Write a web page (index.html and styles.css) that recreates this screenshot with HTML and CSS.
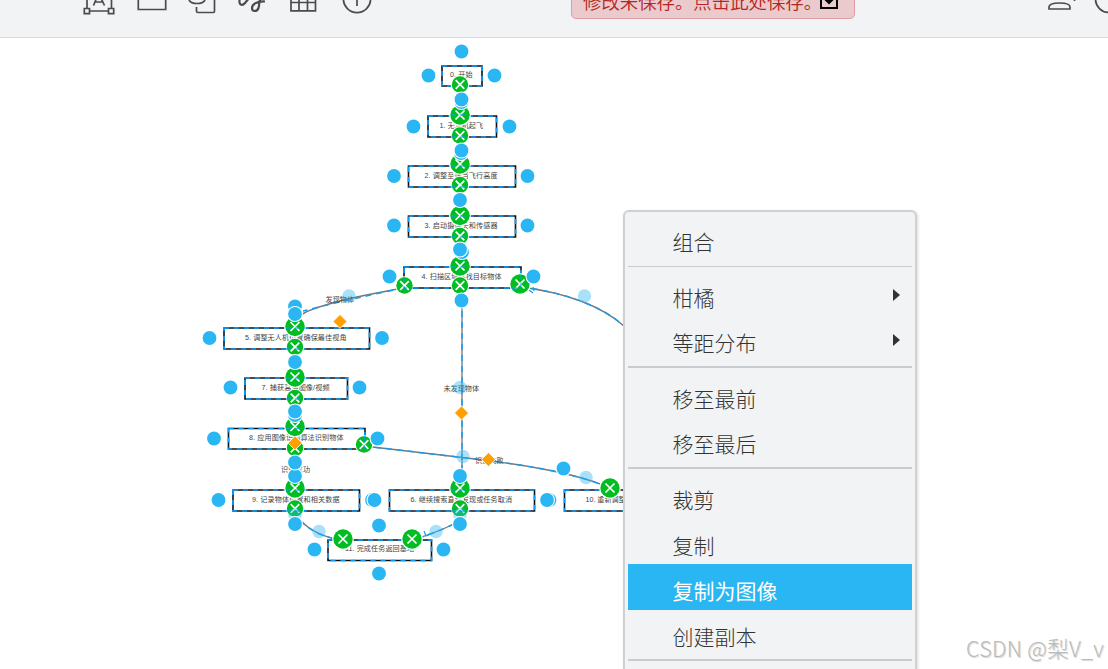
FILE: index.html
```html
<!DOCTYPE html>
<html lang="zh-CN">
<head>
<meta charset="utf-8">
<title>流程图</title>
<link rel="stylesheet" href="styles.css">
</head>
<body>
<div class="app">
  <header class="toolbar">
    <svg class="tools" width="300" height="20" viewBox="80 0 300 20">
      <path d="M87 0V8M111.500 0V8M90 11H108M93.500 5.500L97.500-4H100L104.500 5.500M95 2H103"/>
      <path d="M84.300 8.500h5.200v5.200h-5.200zM108.500 8.500h5.200v5.200h-5.200z"/>
      <path d="M138.300-4V9.500H165.700V-4"/>
      <path d="M189 0Q191 3.500 197 3.500Q203 3.500 205 0M196.500 7V11Q196.500 12.500 198 12.500H213.500Q214.500 12.500 214.500 11V-2"/>
      <path class="thick" d="M240-2C238 5 242 6.500 245 3L250-3M265 1.500C258 1 252 4 252 8C252 12 257 12 258.500 8C260 4 258 0 262-3"/>
      <path d="M291-4V10.800H315.500V-4M299-4V10.500M307.500-4V10.500M291 2.500H315.500"/>
      <circle cx="357" cy="-1" r="13.600"/><path d="M357-5V6"/>
    </svg>
    <button class="notice"><span>修改未保存。点击此处保存。</span>
      <svg class="save" width="20" height="20" viewBox="0 0 20 20"><path d="M2 1V18H18V1"/><path class="arrow" d="M5 9.500H8V5H12V9.500H15L10 14.500Z"/></svg>
    </button>
    <svg class="tools user" width="68" height="20" viewBox="1040 0 68 20">
      <path d="M1049 9V7Q1049 3 1059.500 3T1070 7V9ZM1074.500-4V1"/><circle cx="1109" cy="-1" r="13.500"/>
    </svg>
  </header>
  <main class="canvas">
    <svg class="diagram" width="1108" height="631" viewBox="0 38 1108 631">
      <defs>
        <g id="port"><circle class="halo" r="8"/><circle class="blue" r="6.900"/></g>
        <g id="green"><circle class="halo" r="10.800"/><circle class="green" r="9.700"/><path class="cross" d="M-4.500-4.500L4.500 4.500M4.500-4.500L-4.500 4.500"/></g>
        <g id="green-s"><circle class="halo" r="9.200"/><circle class="green" r="8.200"/><path class="cross" d="M-4.300-4.300L4.300 4.300M4.300-4.300L-4.300 4.300"/></g>
        <path id="diamond" class="orange" d="M0-7L7 0L0 7L-7 0Z"/>
      </defs>
      <path class="edge" d="M462 300V490M404 288Q318 303 301 315M521 287Q590 296 624 326M364 446L475 459Q570 470 610 488M300 520Q316 537 343 540M454 524Q433 534 412 540"/>
      <path class="edge-dash" d="M462 300V490M404 288Q350 299 303 311M521 287Q590 296 624 326M364 446L475 459Q570 470 610 488M300 520Q316 537 343 540M454 524Q433 534 412 540"/>
      <path class="node" d="M442 66H482V86H442ZM428 116H496.500V137H428ZM408.500 166H515.500V187H408.500ZM408.500 216H515.500V237H408.500ZM404 267H521V288H404ZM224 328H369.500V349H224ZM245 378H347.500V399H245ZM228.500 428.500H365V449H228.500ZM233 490H359.500V511H233ZM389.500 490H534.500V511H389.500ZM564.500 490H700V511H564.500ZM328 540H431.500V560.500H328Z"/>
      <path class="node-dash" d="M442 66H482V86H442ZM428 116H496.500V137H428ZM408.500 166H515.500V187H408.500ZM408.500 216H515.500V237H408.500ZM404 267H521V288H404ZM224 328H369.500V349H224ZM245 378H347.500V399H245ZM228.500 428.500H365V449H228.500ZM233 490H359.500V511H233ZM389.500 490H534.500V511H389.500ZM564.500 490H700V511H564.500ZM328 540H431.500V560.500H328Z"/>
      <path class="hint" d="M533 287L534 291M529 290L533 293M424 531L426 536L431 534"/>
      <g class="label">
        <text x="450" y="77" textLength="22.500">0. 开始</text>
        <text x="439.500" y="128" textLength="43.500">1. 无人机起飞</text>
        <text x="424.500" y="178" textLength="73">2. 调整至适当飞行高度</text>
        <text x="424.500" y="228" textLength="73">3. 启动摄像头和传感器</text>
        <text x="421.500" y="279" textLength="80">4. 扫描区域寻找目标物体</text>
        <text x="245" y="340" textLength="101.500">5. 调整无人机位置确保最佳视角</text>
        <text x="261.500" y="390" textLength="68">7. 捕获高清图像/视频</text>
        <text x="249" y="440" textLength="94.500">8. 应用图像识别算法识别物体</text>
        <text x="252" y="502" textLength="87.500">9. 记录物体位置和相关数据</text>
        <text x="410.500" y="502" textLength="101.500">6. 继续搜索直到发现或任务取消</text>
        <text x="585.500" y="502">10. 重新调整识别</text>
        <text x="345" y="551" textLength="69">11. 完成任务返回基地</text>
        <text x="325.500" y="302" textLength="28.500">发现物体</text>
        <text x="443.500" y="391" textLength="35.500">未发现物体</text>
        <text x="281" y="472" textLength="29">识别成功</text>
        <text x="475" y="463" textLength="28.500">识别失败</text>
      </g>
      <g class="faint">
        <circle cx="349" cy="296" r="6.700"/><circle cx="584.500" cy="296" r="6.700"/><circle cx="460" cy="387.500" r="6.700"/><circle cx="463" cy="456.500" r="6.700"/><circle cx="586" cy="477.500" r="6.700"/><circle cx="319" cy="531.500" r="6.700"/><circle cx="436" cy="531.500" r="6.700"/>
      </g>
      <use href="#green" x="460" y="115"/><use href="#green" x="460" y="164"/><use href="#green" x="460" y="215.500"/><use href="#green" x="460" y="266"/>
      <use href="#green" x="295" y="326.500"/><use href="#green" x="295" y="377"/><use href="#green" x="295" y="426.500"/><use href="#green" x="295" y="488"/><use href="#green" x="460" y="488"/><use href="#green" x="610" y="488"/><use href="#green" x="520" y="284"/><use href="#green" x="343" y="539"/><use href="#green" x="412" y="539"/>
      <use href="#green-s" x="460" y="84.500"/><use href="#green-s" x="460" y="135.500"/><use href="#green-s" x="460" y="185"/><use href="#green-s" x="460" y="236"/><use href="#green-s" x="460" y="285.500"/><use href="#green-s" x="404.500" y="285.500"/>
      <use href="#green-s" x="295" y="347"/><use href="#green-s" x="295" y="398"/><use href="#green-s" x="295" y="448"/><use href="#green-s" x="364" y="444.500"/><use href="#green-s" x="295" y="508.500"/><use href="#green-s" x="460" y="508.500"/>
      <g class="faint"><circle cx="295" cy="515" r="6.700"/><circle cx="460" cy="515" r="6.700"/></g>
      <path class="over-dash" d="M451 115H470M451 137H470M451 166H470M451 187H470M451 216H470M451 237H470M451 267H470M286 328H305M286 349H305M286 378H305M286 399H305M286 428.500H305M286 490H305M451 490H470M286 511H305M451 511H470M404 277V288H413M512 288H521V275M364.500 436V449"/>
      <use href="#port" x="461.500" y="102"/><use href="#port" x="461" y="153"/><use href="#port" x="462" y="252"/><use href="#port" x="295" y="415"/>
      <use href="#port" x="461.500" y="51.500"/><use href="#port" x="428.500" y="75.500"/><use href="#port" x="494.500" y="75.500"/><use href="#port" x="461.500" y="99.500"/>
      <use href="#port" x="413.500" y="126.500"/><use href="#port" x="509.500" y="126.500"/><use href="#port" x="461.500" y="150.500"/><use href="#port" x="394" y="176"/><use href="#port" x="527.500" y="176"/><use href="#port" x="460" y="200"/>
      <use href="#port" x="394" y="225.500"/><use href="#port" x="527.500" y="225.500"/><use href="#port" x="460" y="249.500"/><use href="#port" x="389.500" y="276.500"/><use href="#port" x="533.500" y="276.500"/><use href="#port" x="461.500" y="300.500"/>
      <use href="#port" x="295" y="306.500"/><use href="#port" x="295" y="314"/><use href="#port" x="209.500" y="338"/><use href="#port" x="382" y="338"/><use href="#port" x="295" y="362"/>
      <use href="#port" x="230.500" y="387.500"/><use href="#port" x="359.500" y="387.500"/><use href="#port" x="295" y="411.500"/><use href="#port" x="214" y="438.500"/><use href="#port" x="377.500" y="438.500"/><use href="#port" x="295" y="476"/><use href="#port" x="295" y="462.500"/>
      <use href="#port" x="218.500" y="500"/><use href="#port" x="372" y="500"/><use href="#port" x="374.500" y="500"/><use href="#port" x="549.500" y="500"/><use href="#port" x="547" y="500"/><use href="#port" x="460" y="476"/><use href="#port" x="563.500" y="468.500"/>
      <use href="#port" x="295" y="524"/><use href="#port" x="460" y="524"/><use href="#port" x="379" y="525.500"/><use href="#port" x="314.500" y="549.500"/><use href="#port" x="443.500" y="549.500"/><use href="#port" x="379" y="573.500"/>
      <use href="#diamond" x="340" y="321.500"/><use href="#diamond" x="461.500" y="413"/><use href="#diamond" x="488.500" y="459.500"/><use href="#diamond" x="295" y="443"/>
    </svg>
    <div class="watermark">CSDN @梨V_v</div>
    <nav class="menu">
      <div class="item">组合</div>
      <hr class="sep thin">
      <div class="item more">柑橘</div>
      <div class="item more">等距分布</div>
      <hr class="sep">
      <div class="item">移至最前</div>
      <div class="item">移至最后</div>
      <hr class="sep">
      <div class="item">裁剪</div>
      <div class="item">复制</div>
      <div class="item active">复制为图像</div>
      <div class="item">创建副本</div>
      <hr class="sep">
    </nav>
  </main>
</div>
</body>
</html>
```

FILE: styles.css
```css
* { box-sizing: border-box; }
body { margin: 0; overflow: hidden; font-family: "Noto Sans CJK SC", sans-serif; }
.app { width: 1108px; height: 669px; display: flex; flex-direction: column; overflow: hidden; background: #fff; }
.toolbar { flex: 0 0 38px; display: grid; grid-template-columns: 300px 284px 68px; column-gap: 191px; padding-left: 80px; align-items: start; background: #f1f3f5; border-bottom: 1px solid #d8dadd; overflow: hidden; }
.tools { fill: none; stroke: #4b4b4b; stroke-width: 1.7; }
.tools .thick { stroke-width: 2.2; }
.user { margin-left: -6px; }
.notice { display: flex; align-items: flex-end; width: 284px; height: 39px; margin-top: -20px; padding: 0 12px 3px 11px; border: 1px solid #e09ca6; border-radius: 5px; background: #eacacd; color: #b62623; font: 350 18.4px/28px "Noto Sans CJK SC", sans-serif; white-space: nowrap; }
.notice span { width: 237px; text-align: left; }
.save { flex: none; margin: 0 0 5px -1px; fill: none; stroke: #000; stroke-width: 2; }
.arrow { fill: #000; stroke: none; }
.canvas { position: relative; flex: 1; overflow: hidden; }
.diagram { display: block; }
.edge { fill: none; stroke: #777; stroke-width: 1.3; }
.edge-dash { fill: none; stroke: #169df2; stroke-width: 1.5; stroke-dasharray: 6 5; }
.node { fill: #fff; stroke: #111; stroke-width: 1.6; }
.node-dash { fill: none; stroke: #0a9dff; stroke-width: 1.7; stroke-dasharray: 5 5; }
.hint { fill: none; stroke: #169df2; stroke-width: 1.2; }
.label { fill: #444; font: 7.1px "Liberation Sans", "Noto Sans CJK SC", sans-serif; }
.halo { fill: #fff; }
.blue { fill: #29b6f2; }
.green { fill: #00bd22; }
.cross { stroke: #fff; stroke-width: 1.7; fill: none; }
.orange { fill: #ff9f00; stroke: #fff; stroke-width: 0.8; }
.faint { fill: #29b6f2; opacity: 0.4; }
.over-dash { fill: none; stroke: #0a9dff; stroke-width: 1.3; stroke-dasharray: 5 4; opacity: 0.75; }
.menu { position: absolute; left: 623px; top: 172px; width: 294px; height: 520px; padding: 3px 3px 0; border: 2px solid #cfd0d2; border-radius: 6px; background: #f1f3f5; box-shadow: 1px 1px 3px rgba(0, 0, 0, 0.15); }
.item { height: 45.7px; padding: 7px 0 0 44.5px; display: flex; align-items: center; color: #333; font-size: 21px; font-weight: 300; line-height: 30px; }
.item.active { background: #29b6f2; color: #fff; font-weight: 400; }
.item.more::after { content: ""; margin: 0 12px 4px auto; border-left: 7px solid #333; border-top: 6px solid transparent; border-bottom: 6px solid transparent; }
.sep { height: 2px; margin: 4px 0 3.7px; border: 0; background: #c9cbce; }
.sep.thin { height: 1px; margin: 5px 0 3.7px; }
.watermark { position: absolute; left: 966px; top: 594px; color: #bababa; font: 300 21.5px/32px "Noto Sans CJK SC", sans-serif; letter-spacing: 0.3px; white-space: nowrap; text-shadow: 1px 1px 1px #d5d5d5; }
```
